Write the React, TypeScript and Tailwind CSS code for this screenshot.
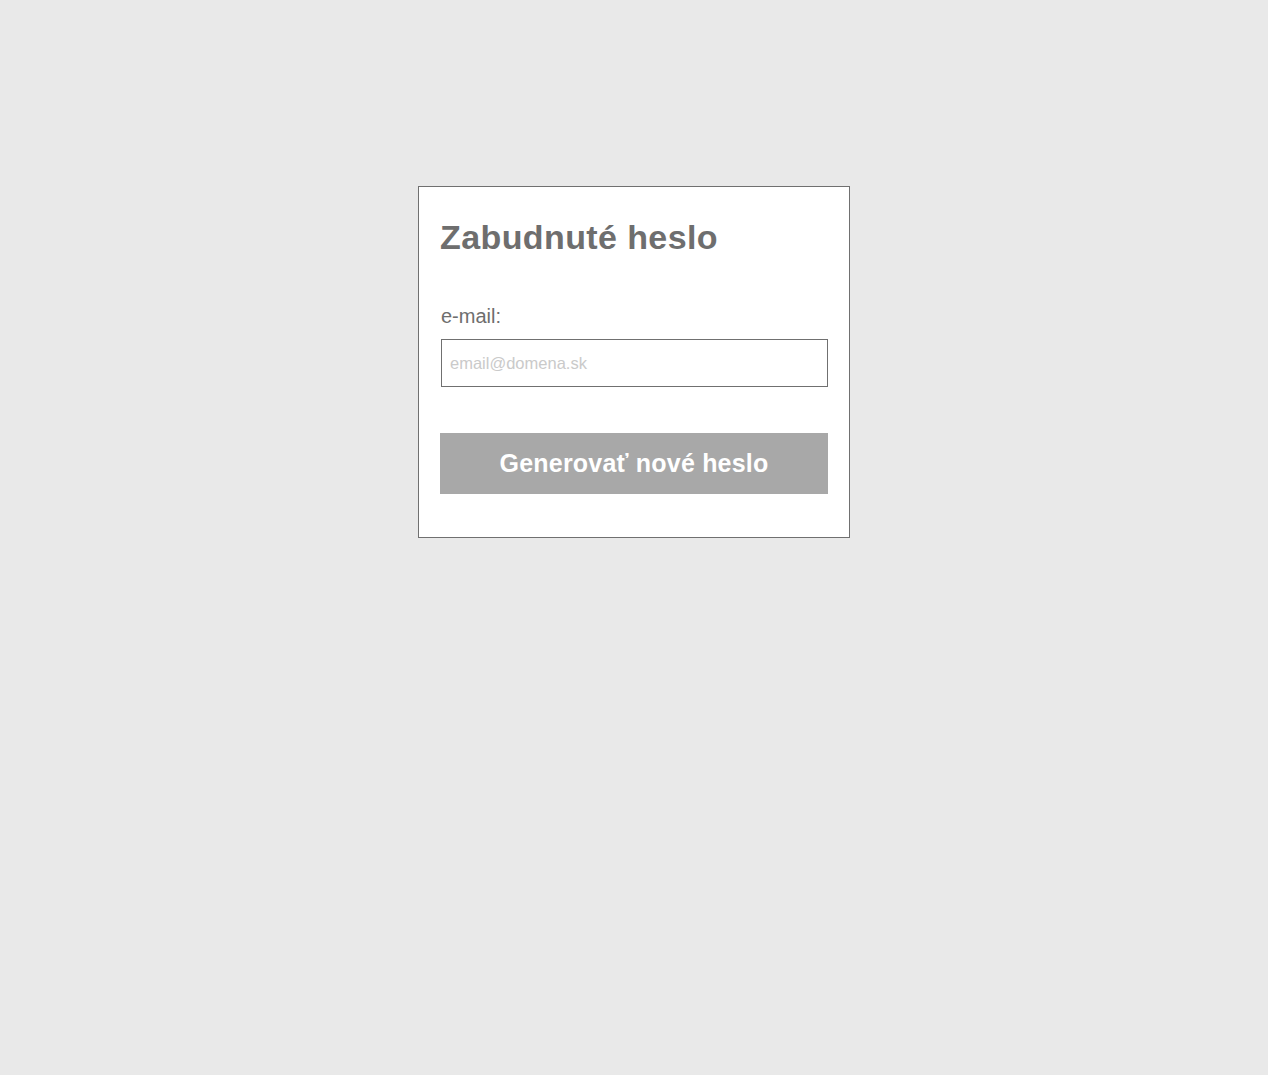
export default function App() {
  return (
    <div
      className="min-h-screen w-full bg-[#e9e9e9] flex justify-center pt-[186px]"
      style={{ fontFamily: '"Liberation Sans", Arial, Helvetica, sans-serif' }}
    >
      <div className="w-[432px] h-[352px] bg-white border border-[#707070] px-[21px] pt-[33px] pb-[43px] flex flex-col">
        <h1 className="text-[34px] leading-none font-bold text-[#6e6e6e] tracking-[0.4px]">
          Zabudnuté heslo
        </h1>

        <label className="mt-[52px] ml-px text-[20px] leading-none text-[#6e6e6e]">e-mail:</label>
        <input
          type="email"
          placeholder="email@domena.sk"
          className="mt-[13px] ml-px h-[48px] w-[387px] border border-[#707070] bg-white px-2 text-[16.5px] font-light text-[#6e6e6e] placeholder:text-[#cacaca] outline-none"
        />

        <button className="mt-[46px] h-[61px] w-[388px] bg-[#a8a8a8] text-white text-[25px] font-bold tracking-[0.2px] flex items-center justify-center">
          Generovať nové heslo
        </button>
      </div>
    </div>
  );
}
